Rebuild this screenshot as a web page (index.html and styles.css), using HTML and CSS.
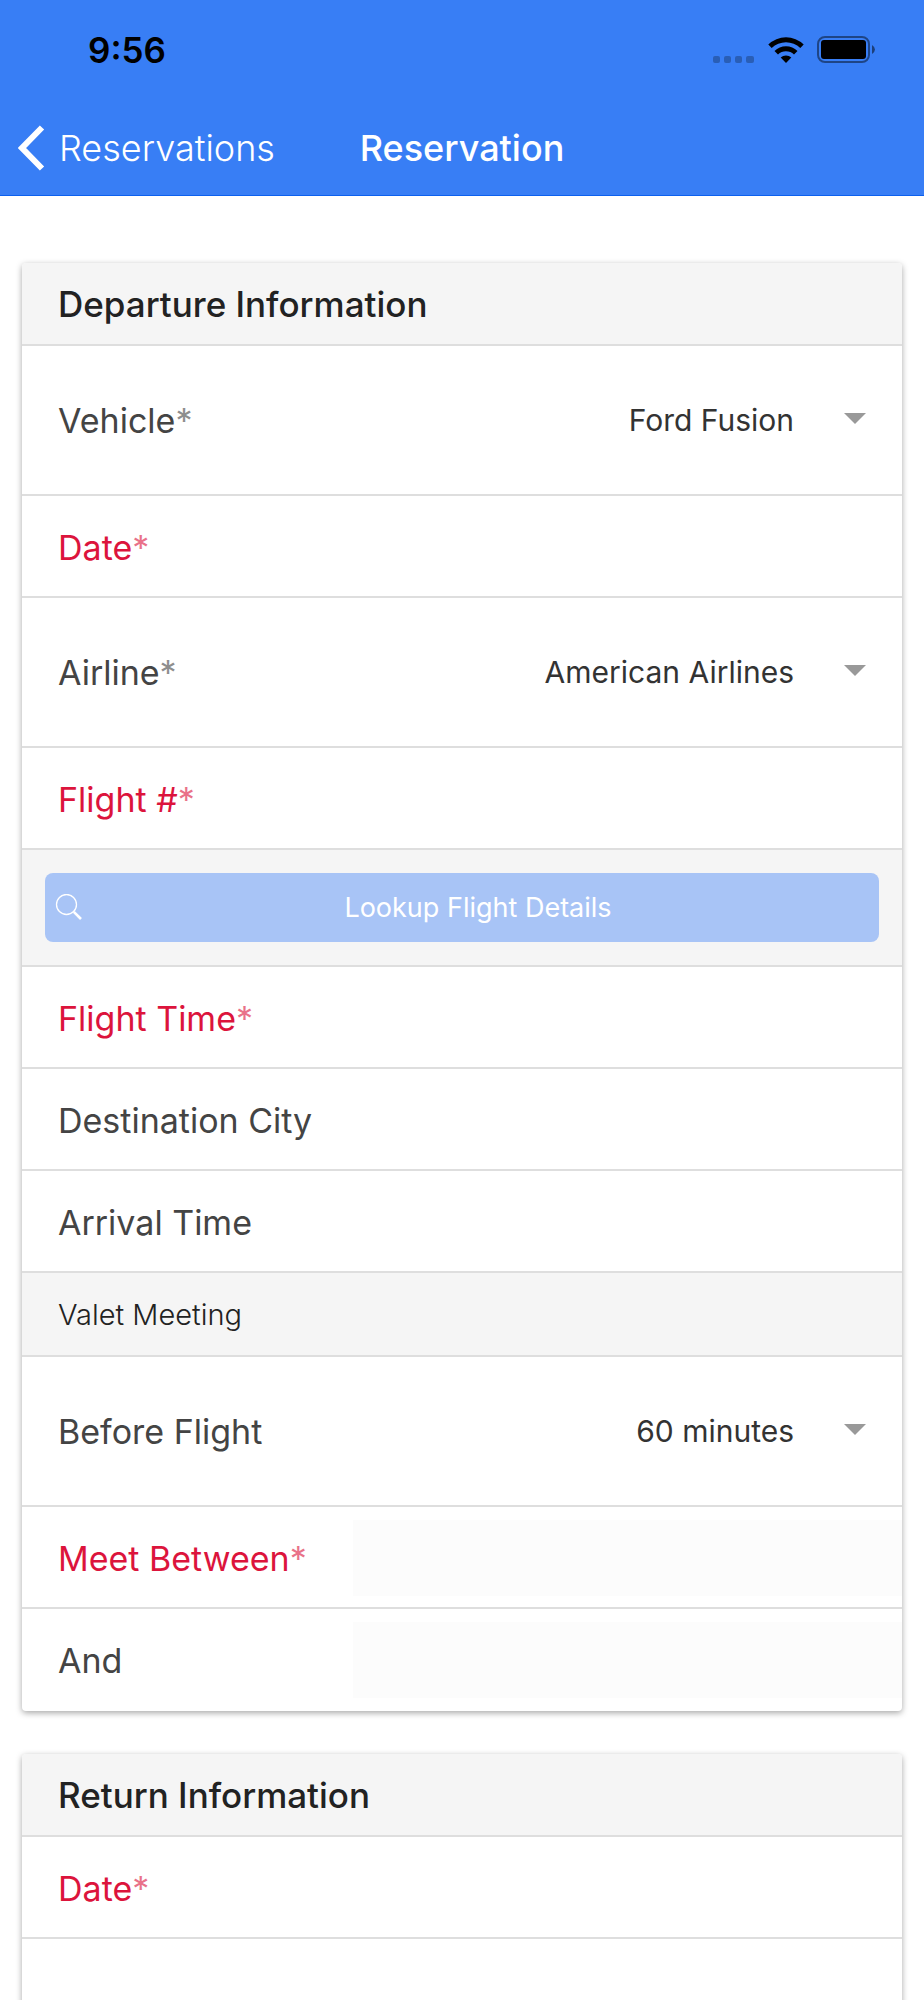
FILE: index.html
```html
<!DOCTYPE html>
<html lang="en">

<head>
    <meta charset="UTF-8">
    <meta name="viewport" content="width=device-width, initial-scale=1.0">
    <title>Reservation</title>
    <link rel="stylesheet" href="styles.css">
</head>

<body>
    <header class="header">
        <div class="status-bar">
            <span class="time">9:56</span>
            <div class="status-icons">
                <svg class="signal" width="42" height="28" viewBox="0 0 42 28">
                    <rect x="0" y="20" width="7" height="7" rx="2" />
                    <rect x="11" y="20" width="7" height="7" rx="2" />
                    <rect x="22" y="20" width="7" height="7" rx="2" />
                    <rect x="33" y="20" width="8" height="7" rx="2" />
                </svg>
                <svg width="36" height="28" viewBox="0 0 36 28">
                    <path d="M0.300 8.500 A25.500 25.500 0 0 1 35.700 8.500 L32.300 12 A20.500 20.500 0 0 0 3.700 12 Z" />
                    <path d="M6.500 15 A16.500 16.500 0 0 1 29.500 15 L26 18.600 A11.500 11.500 0 0 0 10 18.600 Z" />
                    <path d="M12.700 21.500 A7.800 7.800 0 0 1 23.300 21.500 L18 27 Z" />
                </svg>
                <svg width="60" height="28" viewBox="0 0 60 28">
                    <rect x="1" y="1" width="51" height="25" rx="7" fill="none" stroke="#000" stroke-opacity="0.45" stroke-width="2" />
                    <rect x="4" y="4" width="45" height="19" rx="3" />
                    <path d="M55 9 Q58 11 58 13.500 Q58 16 55 18 Z" opacity="0.5" />
                </svg>
            </div>
        </div>
        <nav class="nav-bar">
            <a class="back-button" href="#">
                <svg width="28" height="46" viewBox="0 0 28 46">
                    <path d="M24 2.500 L4 23 L24 43.500" fill="none" stroke="#fff" stroke-width="6" />
                </svg>
                <span>Reservations</span>
            </a>
            <h1 class="title">Reservation</h1>
        </nav>
    </header>

    <main class="content">
        <form class="card">
            <h2 class="item item-divider heading">Departure Information</h2>
            <div class="item item-select">
                <label for="Vehicle">Vehicle<span class="star">*</span></label>
                <select id="Vehicle" name="Vehicle">
                    <option>Ford Fusion</option>
                </select>
            </div>
            <div class="item item-input invalid">
                <label for="DepartureDate">Date<span class="star">*</span></label>
                <input type="text" id="DepartureDate" name="DepartureDate">
            </div>
            <div class="item item-select">
                <label for="Airline">Airline<span class="star">*</span></label>
                <select id="Airline" name="Airline">
                    <option>American Airlines</option>
                </select>
            </div>
            <div class="item item-input invalid">
                <label for="FlightNumber">Flight #<span class="star">*</span></label>
                <input type="text" id="FlightNumber" name="FlightNumber">
            </div>
            <div class="item item-button">
                <button type="button" class="lookup" disabled>
                    <svg width="28" height="28" viewBox="0 0 28 28" fill="none" stroke="#fff">
                        <circle cx="11.500" cy="10.500" r="10" stroke-width="1.300" />
                        <path d="M18.800 17.800 L26 25" stroke-width="2.600" />
                    </svg>
                    <span>Lookup Flight Details</span>
                </button>
            </div>
            <div class="item item-input invalid">
                <label for="FlightTime">Flight Time<span class="star">*</span></label>
                <input type="text" id="FlightTime" name="FlightTime">
            </div>
            <div class="item item-input">
                <label for="City">Destination City</label>
                <input type="text" id="City" name="City">
            </div>
            <div class="item item-input">
                <label for="ArrivalTime">Arrival Time</label>
                <input type="text" id="ArrivalTime" name="ArrivalTime">
            </div>
            <h3 class="item item-divider subheading">Valet Meeting</h3>
            <div class="item item-select">
                <label for="BeforeFlight">Before Flight</label>
                <select id="BeforeFlight" name="BeforeFlight">
                    <option>60 minutes</option>
                </select>
            </div>
            <div class="item item-input invalid">
                <label for="MeetBetween">Meet Between<span class="star">*</span></label>
                <input type="text" id="MeetBetween" name="MeetBetween" disabled>
            </div>
            <div class="item item-input">
                <label for="And">And</label>
                <input type="text" id="And" name="And" disabled>
            </div>
        </form>

        <form class="card">
            <h2 class="item item-divider heading">Return Information</h2>
            <div class="item item-input invalid">
                <label for="ReturnDate">Date<span class="star">*</span></label>
                <input type="text" id="ReturnDate" name="ReturnDate">
            </div>
            <div class="item item-select"></div>
        </form>
    </main>
</body>

</html>
```
FILE: styles.css
```css
* {
    box-sizing: border-box;
}

body {
    display: flex;
    flex-direction: column;
    height: 100vh;
    margin: 0;
    background-color: #fff;
    color: #444;
    font-family: Inter, "Liberation Sans", sans-serif;
    font-size: 34px;
}

h1,
h2,
h3 {
    margin: 0;
}

/* Header */
.header {
    flex-shrink: 0;
    background-color: #387ef5;
    border-bottom: 1px solid #0c60ee;
}

.status-bar {
    display: flex;
    align-items: center;
    justify-content: space-between;
    height: 100px;
    padding: 0 47px 0 88px;
    color: #000;
}

.time {
    font-size: 35px;
    font-weight: 600;
}

.status-icons {
    display: flex;
    gap: 13px;
}

.signal {
    opacity: 0.25;
}

.nav-bar {
    display: grid;
    grid-template-columns: 1fr auto 1fr;
    align-items: center;
    height: 95px;
    padding: 0 18px;
    color: #fff;
}

.back-button {
    display: flex;
    align-items: center;
    gap: 13px;
    color: #fff;
    font-size: 36px;
    font-weight: 300;
    text-decoration: none;
}

.title {
    font-size: 36px;
    font-weight: 500;
}

/* Cards */
.content {
    flex: 1;
    overflow-y: auto;
    padding: 67px 22px 0;
    scrollbar-width: none;
}

.card {
    margin-bottom: 43px;
    border-radius: 4px;
    background-color: #fff;
    box-shadow: 0 2px 6px rgba(0, 0, 0, 0.35);
    overflow: hidden;
}

.item {
    display: flex;
    align-items: center;
    border-bottom: 2px solid #dedede;
}

.item:last-child {
    border-bottom-color: transparent;
}

.item label {
    flex-shrink: 0;
    width: 331px;
    padding-left: 36px;
    white-space: nowrap;
}

.item-divider {
    padding: 0 36px;
    background-color: #f5f5f5;
    color: #222;
}

.heading {
    height: 83px;
    font-size: 35px;
    font-weight: 500;
}

.subheading {
    height: 84px;
    font-size: 29px;
    font-weight: 300;
}

.star {
    opacity: 0.6;
}

.invalid {
    color: #dc143c;
}

.item-input {
    height: 102px;
    padding-top: 2px;
}

.item-input input {
    flex: 1;
    min-width: 0;
    height: 76px;
    padding: 0 20px;
    border: none;
    background-color: transparent;
    font: inherit;
}

.item-input input:disabled {
    background-color: #fcfcfc;
}

.item-select {
    position: relative;
    height: 150px;
}

.item-select select {
    flex: 1;
    min-width: 0;
    height: 100%;
    padding: 0 108px 0 0;
    border: none;
    background-color: transparent;
    color: #333;
    font-family: inherit;
    font-size: 30px;
    text-align-last: right;
    appearance: none;
}

/* Drop-down arrow */
.item-select:has(select)::after {
    content: "";
    position: absolute;
    top: 67px;
    right: 36px;
    border: 11px solid transparent;
    border-top-color: #999;
    border-bottom: none;
    pointer-events: none;
}

.item-button {
    height: 117px;
    padding: 0 23px;
    background-color: #f5f5f5;
}

.lookup {
    display: grid;
    grid-template-columns: 28px 1fr;
    gap: 4px;
    align-items: center;
    width: 100%;
    height: 69px;
    padding: 0 10px;
    border: none;
    border-radius: 8px;
    background-color: #a8c4f6;
    color: #fff;
    font-family: inherit;
    font-size: 27px;
}
```
